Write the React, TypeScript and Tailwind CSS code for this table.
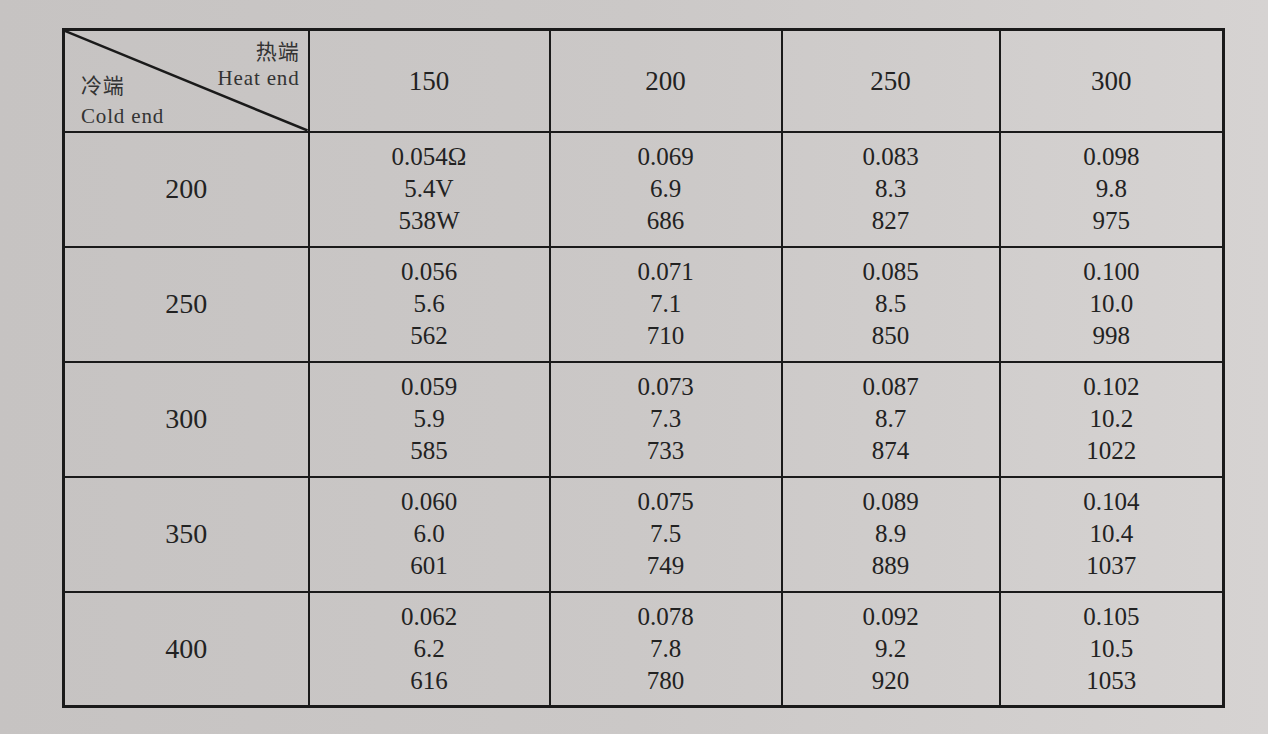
const cols = ["150", "200", "250", "300"];

const rows: { cold: string; cells: string[][] }[] = [
  {
    cold: "200",
    cells: [
      ["0.054Ω", "5.4V", "538W"],
      ["0.069", "6.9", "686"],
      ["0.083", "8.3", "827"],
      ["0.098", "9.8", "975"],
    ],
  },
  {
    cold: "250",
    cells: [
      ["0.056", "5.6", "562"],
      ["0.071", "7.1", "710"],
      ["0.085", "8.5", "850"],
      ["0.100", "10.0", "998"],
    ],
  },
  {
    cold: "300",
    cells: [
      ["0.059", "5.9", "585"],
      ["0.073", "7.3", "733"],
      ["0.087", "8.7", "874"],
      ["0.102", "10.2", "1022"],
    ],
  },
  {
    cold: "350",
    cells: [
      ["0.060", "6.0", "601"],
      ["0.075", "7.5", "749"],
      ["0.089", "8.9", "889"],
      ["0.104", "10.4", "1037"],
    ],
  },
  {
    cold: "400",
    cells: [
      ["0.062", "6.2", "616"],
      ["0.078", "7.8", "780"],
      ["0.092", "9.2", "920"],
      ["0.105", "10.5", "1053"],
    ],
  },
];

const widths = ["w-[245px]", "w-[241px]", "w-[232px]", "w-[218px]", "w-[224px]"];

export default function App() {
  return (
    <div
      className="h-[734px] w-[1268px] overflow-hidden bg-gradient-to-r from-[#c6c3c2] via-[#cbc8c7] to-[#d6d3d2] pl-[62px] pt-[28px] text-[#222]"
      style={{ fontFamily: '"Liberation Serif", "Noto Sans CJK SC", serif' }}
    >
      <table className="border-collapse border-[3px] border-[#1a1a1a]">
        <thead>
          <tr className="h-[102px]">
            <th className={`relative ${widths[0]} border-2 border-[#1a1a1a] p-0 font-normal`}>
              <svg className="absolute inset-0 h-full w-full" preserveAspectRatio="none" viewBox="0 0 100 100">
                <line x1="0" y1="0" x2="100" y2="100" stroke="#1a1a1a" strokeWidth="2.5" vectorEffect="non-scaling-stroke" />
              </svg>
              <div className="absolute right-[8px] top-[8px] text-right text-[21px] leading-[26px] tracking-[0.04em] text-[#333]">
                <div>热端</div>
                <div>Heat end</div>
              </div>
              <div className="absolute left-[16px] top-[40px] text-left text-[21px] leading-[30px] tracking-[0.04em] text-[#333]">
                <div>冷端</div>
                <div>Cold end</div>
              </div>
            </th>
            {cols.map((c, i) => (
              <th key={c} className={`${widths[i + 1]} border-2 border-[#1a1a1a] text-center text-[27px] font-normal`}>
                {c}
              </th>
            ))}
          </tr>
        </thead>
        <tbody>
          {rows.map((r) => (
            <tr key={r.cold} className="h-[115px]">
              <td className="border-2 border-[#1a1a1a] text-center text-[28px]">{r.cold}</td>
              {r.cells.map((cell, i) => (
                <td key={i} className="border-2 border-[#1a1a1a] text-center text-[25px] leading-[32px]">
                  {cell.map((v) => (
                    <div key={v}>{v}</div>
                  ))}
                </td>
              ))}
            </tr>
          ))}
        </tbody>
      </table>
    </div>
  );
}
